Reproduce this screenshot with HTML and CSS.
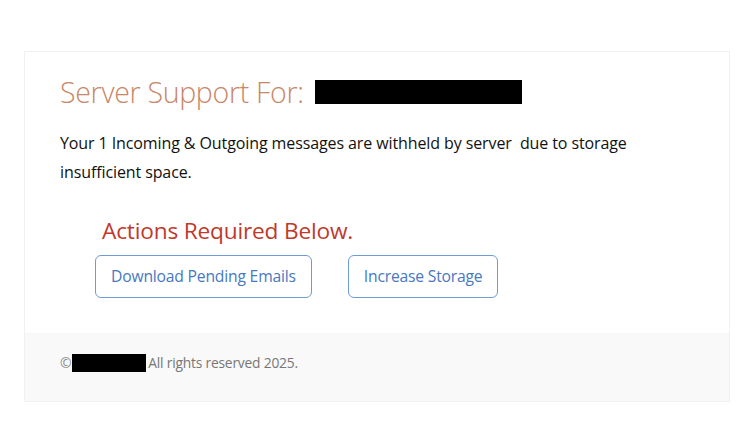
FILE: index.html
```html
<!DOCTYPE html>
<html>
<head>
<meta charset="utf-8">
<link rel="stylesheet" href="styles.css">
</head>
<body>
<div class="card">
  <div class="main">
    <h1 class="title">Server Support For: <span class="redact redact-title"></span></h1>
    <p class="message">Your 1 Incoming &amp; Outgoing messages are withheld by server&nbsp; due to storage insufficient space.</p>
    <div class="actions">
      <h2 class="actions-title">Actions Required Below.</h2>
      <div class="buttons">
        <a class="btn">Download Pending Emails</a>
        <a class="btn">Increase Storage</a>
      </div>
    </div>
  </div>
  <div class="footer">
    <span class="copy">©</span><span class="redact redact-footer"></span><span>All rights reserved 2025.</span>
  </div>
</div>
</body>
</html>
```

FILE: styles.css
```css
html, body {
  margin: 0;
  padding: 0;
  background: #ffffff;
}
body {
  font-family: "Open Sans", "Noto Sans", sans-serif;
  color: #111;
  padding: 51px 24px 0 24px;
}
.card {
  width: 706px;
  height: 351px;
  box-sizing: border-box;
  border: 1px solid #f1f1f1;
  display: flex;
  flex-direction: column;
}
.main {
  flex: 1;
  padding: 20px 35px 0 35px;
}
.title {
  margin: 0;
  font-weight: 300;
  font-size: 28.5px;
  color: #c98668;
  line-height: 40px;
  display: flex;
  align-items: center;
  letter-spacing: -0.3px;
}
.redact {
  display: inline-block;
  background: #000;
}
.redact-title {
  width: 207px;
  height: 24px;
  margin-left: 11px;
}
.message {
  margin: 17px 0 0 0;
  max-width: 580px;
  font-size: 16px;
  line-height: 29px;
  color: #111;
  letter-spacing: -0.1px;
}
.actions {
  padding-left: 35px;
  margin-top: 28px;
}
.actions-title {
  margin: 0 0 0 7px;
  font-weight: 400;
  font-size: 22.7px;
  line-height: 32px;
  color: #c0392b;
  letter-spacing: -0.2px;
}
.buttons {
  display: flex;
  gap: 36px;
  margin-top: 8px;
}
.btn {
  display: inline-block;
  box-sizing: border-box;
  height: 43px;
  line-height: 41px;
  padding: 0 15px;
  border: 1px solid #6f9ad8;
  border-radius: 6px;
  color: #4778c2;
  font-size: 15.7px;
  letter-spacing: -0.2px;
}
.footer {
  height: 68px;
  box-sizing: border-box;
  background: #f9f9f9;
  display: flex;
  align-items: flex-start;
  padding: 20px 0 0 35px;
  font-size: 13.8px;
  line-height: 20px;
  color: #777;
  letter-spacing: -0.2px;
}
.copy {
  color: #888;
}
.redact-footer {
  width: 74px;
  height: 18px;
  margin: 1px 2px 0 1px;
}
```
